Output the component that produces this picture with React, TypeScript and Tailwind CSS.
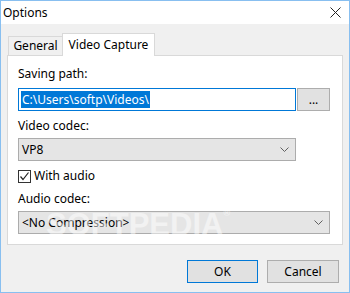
import React from "react";

const Chevron = () => (
  <svg width="9" height="5" viewBox="0 0 9 5" className="shrink-0">
    <path d="M0.5 0.5 L4.5 4.5 L8.5 0.5" fill="none" stroke="#606060" strokeWidth="1" />
  </svg>
);

export default function App() {
  return (
    <div
      className="relative w-[350px] h-[293px] border border-[#88bff0] bg-[#f0f0f0] flex flex-col text-[12px] text-black overflow-hidden"
      style={{ fontFamily: '"Noto Sans", "Open Sans", sans-serif' }}
    >
      {/* Title bar */}
      <div className="h-[23px] bg-white flex items-center justify-between pl-[2px] pr-[8px] shrink-0">
        <span className="leading-[16px]">Options</span>
        <svg width="11" height="11" viewBox="0 0 11 11">
          <path d="M0.5 0.5 L10.5 10.5 M10.5 0.5 L0.5 10.5" stroke="#222" strokeWidth="1" />
        </svg>
      </div>

      {/* Tabs */}
      <div className="flex items-end pl-[6px] pt-[9px] shrink-0 relative z-10">
        <div className="h-[19px] w-[55px] ml-[1px] border border-b-0 border-[#d9d9d9] bg-[#f0f0f0] flex items-center justify-center leading-[16px]">
          General
        </div>
        <div className="h-[23px] w-[93px] -ml-[1px] border border-b-0 border-[#d9d9d9] bg-white flex items-center justify-center leading-[16px] mb-[-1px]">
          Video Capture
        </div>
      </div>

      {/* Panel */}
      <div className="ml-[6px] w-[336px] h-[190px] border border-[#d9d9d9] bg-white flex flex-col pl-[10px] pt-[10px] shrink-0">
        <div className="leading-[16px] h-[16px]">Saving path:</div>
        <div className="flex mt-[6px] gap-[1px]">
          <div className="w-[278px] h-[23px] border border-[#0078d7] bg-white flex items-center pl-[2px]">
            <span className="bg-[#0078d7] text-white leading-[17px] px-[1px]">C:\Users\softp\Videos\</span>
          </div>
          <div className="w-[33px] h-[23px] border border-[#adadad] bg-[#e1e1e1] flex items-center justify-center leading-[16px]">
            ...
          </div>
        </div>
        <div className="leading-[16px] h-[16px] mt-[7px]">Video codec:</div>
        <div className="mt-[4px] w-[278px] h-[23px] border border-[#acacac] bg-[#e5e5e5] flex items-center justify-between pl-[3px] pr-[6px]">
          <span className="leading-[16px]">VP8</span>
          <Chevron />
        </div>
        <div className="mt-[7px] h-[16px] flex items-center gap-[3px]">
          <div className="w-[13px] h-[13px] border border-[#333] bg-white flex items-center justify-center">
            <svg width="11" height="11" viewBox="0 0 11 11">
              <path d="M1.5 5.5 L4 8.5 L9.5 1.5" fill="none" stroke="#222" strokeWidth="1.2" />
            </svg>
          </div>
          <span className="leading-[16px]">With audio</span>
        </div>
        <div className="leading-[16px] h-[16px] mt-[7px]">Audio codec:</div>
        <div className="mt-[4px] w-[312px] h-[23px] border border-[#acacac] bg-[#e5e5e5] flex items-center justify-between pl-[3px] pr-[6px]">
          <span className="leading-[16px]">&lt;No Compression&gt;</span>
          <Chevron />
        </div>
      </div>

      {/* Buttons */}
      <div className="flex justify-end gap-[9px] pr-[10px] mt-[15px]">
        <div className="w-[71px] h-[23px] border border-[#0078d7] bg-[#e1e1e1] flex items-center justify-center leading-[16px]">
          OK
        </div>
        <div className="w-[72px] h-[23px] border border-[#adadad] bg-[#e1e1e1] flex items-center justify-center leading-[16px]">
          Cancel
        </div>
      </div>

      {/* Watermark */}
      <div
        className="absolute left-[45px] top-[208px] text-[31px] font-bold text-white opacity-50 pointer-events-none leading-none"
        style={{ fontFamily: '"Liberation Sans", sans-serif' }}
      >
        SOFTPEDIA<span className="text-[9px] align-top">®</span>
      </div>
    </div>
  );
}
